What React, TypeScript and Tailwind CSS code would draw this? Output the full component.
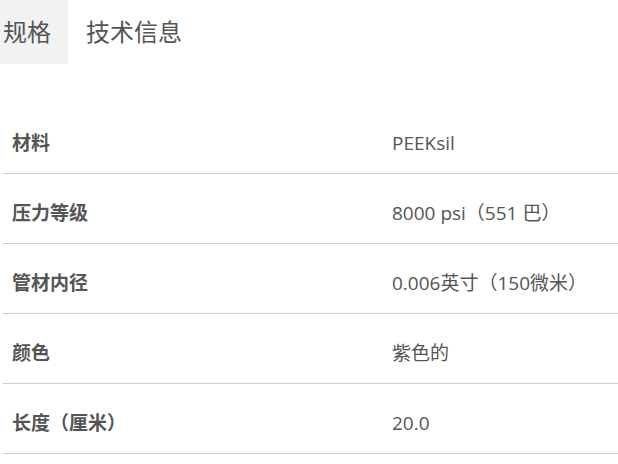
const rows = [
  { label: '材料', value: 'PEEKsil' },
  { label: '压力等级', value: '8000 psi（551 巴）' },
  { label: '管材内径', value: '0.006英寸（150微米）' },
  { label: '颜色', value: '紫色的' },
  { label: '长度（厘米）', value: '20.0' },
]

export default function App() {
  return (
    <div
      className="w-[618px] h-[464px] bg-white text-[#555] overflow-hidden"
      style={{ fontFamily: "'Open Sans', 'Noto Sans CJK SC', sans-serif" }}
    >
      <div className="flex h-16">
        <div className="flex items-center bg-[#f2f2f2] pl-[3px] pr-[17px] text-[24px]">规格</div>
        <div className="flex items-center pl-[18px] pr-4 text-[24px]">技术信息</div>
      </div>

      <div className="mt-[40px] ml-[3px]">
        {rows.map((r) => (
          <div
            key={r.label}
            className="grid grid-cols-[389px_1fr] border-b border-[#cccccc] pt-[25px] pb-[16px] text-[19px] leading-[28px]"
          >
            <div className="pl-[9px] font-bold">{r.label}</div>
            <div>{r.value}</div>
          </div>
        ))}
      </div>
    </div>
  )
}
